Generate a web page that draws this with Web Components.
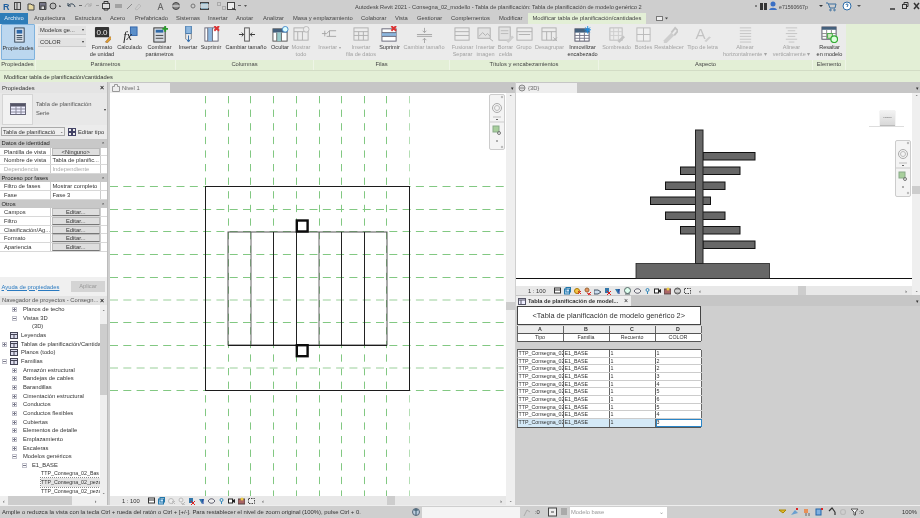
<!DOCTYPE html>
<html lang="es"><head><meta charset="utf-8"><title>Revit</title>
<style>
html,body{margin:0;padding:0;width:920px;height:518px;overflow:hidden;background:#cfcfcf}
body{font:5.8px "Liberation Sans",Arial,sans-serif;color:#333}
</style></head><body>
<rvt-app></rvt-app>
<script>
const I={
 props:'<rect x="5" y="1" width="10" height="15" fill="#dfe6ee" stroke="#345"/><rect x="7" y="3" width="6" height="4" fill="#2d68a8"/><path d="M7 9h6M7 11h6M7 13h6" stroke="#345"/>',
 unit:'<rect x="1" y="1" width="15" height="11" rx="1" fill="#333"/><text x="8.5" y="10" font-size="8.5" fill="#eee" text-anchor="middle" font-family="Liberation Sans">0.0</text><path d="M12 17l5-6 2 2-5 5z" fill="#e0a030" stroke="#853" stroke-width=".5"/>',
 fx:'<rect x="10" y="1" width="7" height="9" fill="#5b8fc9" stroke="#36a"/><text x="7" y="15" font-size="13" font-style="italic" fill="#222" text-anchor="middle" font-family="Liberation Serif">fx</text>',
 combine:'<rect x="3" y="2" width="12" height="15" fill="#d5dae0" stroke="#333"/><rect x="5" y="4" width="8" height="3" fill="#2d68a8"/><path d="M5 10h8M5 13h8" stroke="#444"/><path d="M15 0v6M12 3h6" stroke="#2a9a2a" stroke-width="2"/>',
 colins:'<rect x="6" y="0" width="6" height="8" fill="#8db7df" stroke="#47a"/><path d="M6 8v6M12 8v6" stroke="#888"/><path d="M9 10v6M7 14l2 3 2-3" stroke="#2d68a8" fill="none"/>',
 coldel:'<rect x="2" y="2" width="14" height="14" fill="#fff" stroke="#667"/><rect x="5" y="2" width="5" height="14" fill="#8db7df"/><path d="M5 2v14M10 2v14" stroke="#667"/><path d="M12 0l5 5M17 0l-5 5" stroke="#d33" stroke-width="2"/>',
 colsize:'<rect x="7" y="2" width="5" height="14" fill="#eee" stroke="#555"/><path d="M1 9h5M4 7l2 2-2 2M18 9h-5M15 7l-2 2 2 2" stroke="#333" fill="none"/>',
 colhide:'<rect x="1" y="3" width="15" height="13" fill="#fff" stroke="#555"/><rect x="1" y="3" width="15" height="4" fill="#44607c"/><rect x="5" y="7" width="5" height="9" fill="#9cc"/><path d="M5 7v9M10 7v9" stroke="#666"/><circle cx="14" cy="3.500" r="3" fill="#dff" stroke="#48c"/>',
 colshow:'<rect x="1" y="2" width="15" height="13" fill="#eee" stroke="#888"/><path d="M1 6h15M5 6v9M10 6v9" stroke="#888"/><circle cx="14" cy="3.500" r="3" fill="#eee" stroke="#999"/>',
 rowins:'<path d="M1 8h5l3-3h7M6 11h10M9 5v6" stroke="#777" fill="none"/><path d="M4 5v6" stroke="#777"/>',
 rowdata:'<rect x="1" y="2" width="15" height="13" fill="#eee" stroke="#888"/><path d="M1 6h15M1 10h15M6 6v9M11 6v9" stroke="#888"/>',
 rowdel:'<rect x="1" y="3" width="15" height="13" fill="#fff" stroke="#667"/><rect x="1" y="7" width="15" height="4" fill="#8db7df"/><path d="M1 7h15M1 11h15" stroke="#667"/><path d="M11 0l5 5M16 0l-5 5" stroke="#d33" stroke-width="2"/>',
 rowsize:'<path d="M1 9h16M1 11h16" stroke="#777"/><path d="M9 2v5M7 5l2 2 2-2M9 18v-5M7 15l2-2 2 2" stroke="#777" fill="none"/>',
 merge:'<rect x="1" y="2" width="15" height="13" fill="#eee" stroke="#888"/><path d="M1 6h15M1 10h15" stroke="#888"/>',
 img:'<rect x="1" y="2" width="13" height="11" fill="#ddd" stroke="#888"/><path d="M2 11l4-4 3 3 2-2 3 3" stroke="#888" fill="none"/><path d="M13 13l4 3" stroke="#888"/>',
 clear:'<rect x="2" y="1" width="12" height="14" fill="#ddd" stroke="#888"/><path d="M4 5h8M4 8h8" stroke="#999"/><path d="M10 16l6-6 2 2-6 6z" fill="#bbb"/>',
 group:'<rect x="1" y="2" width="16" height="13" fill="#eee" stroke="#888"/><path d="M1 6h16M3 9h12" stroke="#888"/>',
 ungroup:'<rect x="1" y="2" width="15" height="13" fill="#eee" stroke="#888"/><path d="M1 6h15M6 6v9M11 6v9" stroke="#888"/><path d="M13 12l4 4M17 12l-4 4" stroke="#888"/>',
 freeze:'<rect x="1" y="3" width="15" height="13" fill="#fff" stroke="#556"/><rect x="1" y="3" width="15" height="4" fill="#44607c"/><path d="M1 10h15M1 13h15M6 7v9M11 7v9" stroke="#778"/><path d="M14.500 0v8M11 4h7M12 1.500l5 5M17 1.500l-5 5" stroke="#1e90e8"/>',
 shade:'<rect x="2" y="2" width="13" height="13" fill="#eee" stroke="#999"/><path d="M2 6h13M2 10h13M6 2v13M11 2v13" stroke="#bbb"/><path d="M10 16l6-6 2 2-6 6z" fill="#aaa"/>',
 border:'<rect x="2" y="2" width="14" height="14" fill="#f3f3f3" stroke="#999"/><path d="M9 2v14M2 9h14" stroke="#999"/>',
 reset:'<path d="M3 15l8-8 3 3-8 8H3z" fill="#bbb"/><path d="M11 7l4-5 3 3-4 5" stroke="#aaa" stroke-width="2" fill="none"/>',
 font:'<text x="7" y="14" font-size="16" fill="#aaa" text-anchor="middle" font-family="Liberation Sans">A</text><path d="M11 16l5-5 2 1-5 5z" fill="#bbb"/>',
 alignh:'<path d="M3 2h12M3 5h12M3 8h12M3 11h12M3 14h12M3 17h12" stroke="#aaa"/>',
 alignv:'<path d="M3 2h12M5 5h8M3 8h12M5 11h8M3 14h12M6 17h6" stroke="#aaa"/>',
 hilite:'<rect x="1" y="1" width="15" height="13" fill="#fff" stroke="#556"/><rect x="1" y="1" width="15" height="3" fill="#44607c"/><path d="M1 8h15M1 11h15M6 4v10M11 4v10" stroke="#888"/><rect x="7" y="8" width="5" height="5" fill="#cfe8c0" stroke="#4a4"/><circle cx="14" cy="14" r="3.500" fill="#dfd" stroke="#3a3" stroke-width="1.300"/>'
};
const svg=(n,s=17)=>`<svg width="${s}" height="${s}" viewBox="0 0 18 18" aria-hidden="true">${I[n]||''}</svg>`;
class Base extends HTMLElement{
 constructor(){super();this.attachShadow({mode:'open'})}
 paint(css,html){this.shadowRoot.innerHTML=`<style>${css}</style>${html}`}
 a(n,d=''){const v=this.getAttribute(n);return v===null?d:v}
}
const mini=(list,gap)=>list.map(c=>`<svg width="7" height="8" viewBox="0 0 7 8" style="margin-right:${gap}px;flex:none">${c}</svg>`).join('');
const BAR=[
 '<rect x=".5" y="1" width="6" height="5" fill="#fff" stroke="#333"/><path d="M1 3h5" stroke="#333"/>',
 '<rect x=".5" y="2" width="5" height="5" fill="#cfe6fa" stroke="#27a"/><rect x="2" y=".5" width="4.500" height="4.500" fill="none" stroke="#27a"/>',
 '<circle cx="3" cy="4" r="2.500" fill="#f5c74a" stroke="#a70"/><path d="M4 4l3 3M7 4l-3 3" stroke="#d22"/>',
 '<circle cx="3" cy="3" r="2" fill="#e8935f" stroke="#963"/><path d="M3 6l4 2M7 5l-3 3" stroke="#d22"/>',
 '<path d="M0 3h4l3 2-3 2H0z" fill="#cde" stroke="#456"/>',
 '<path d="M1 1h4v5H1z" fill="#37a"/><path d="M3 4l4 4M7 4l-4 4" stroke="#d22"/>',
 '<path d="M1 2l5 0-2 5z" fill="#37a"/><path d="M5 2v5" stroke="#139"/>',
 '<circle cx="3.500" cy="3.500" r="3" fill="#dfe" stroke="#566"/><path d="M1 7h5" stroke="#566"/>',
 '<path d="M0 4c2-3 5-3 7 0-2 3-5 3-7 0z" fill="#eee" stroke="#556"/>',
 '<circle cx="3.500" cy="3" r="1.500" fill="none" stroke="#38b"/><path d="M3.500 4.500V7" stroke="#38b"/>',
 '<rect x=".5" y="2" width="4" height="4" fill="#fff" stroke="#222"/><path d="M5 3l2-1v4l-2-1z" fill="#222"/>',
 '<rect x="0" y="2" width="7" height="5" fill="#a66" stroke="#544"/><circle cx="4" cy="2" r="1.500" fill="#ec4"/>',
 '<circle cx="3.500" cy="4" r="3" fill="#aaa" stroke="#555"/><path d="M1 4h5" stroke="#fff"/>',
 '<rect x=".5" y="1.500" width="6" height="5" fill="#eee" stroke="#444" stroke-dasharray="1.500 1"/>'
];
const FADE=i=>BAR[i].replace(/stroke="#[0-9a-f]+"/g,'stroke="#bbb"').replace(/fill="#[0-9a-f]+"/g,'fill="#eee"');
class RvtTitlebar extends Base{connectedCallback(){this.paint(`
 :host{display:flex;height:13px;background:#cecece;align-items:center;position:relative;color:#444}
 .r{font:bold 9px "Liberation Sans";color:#1f5f9f;width:11px;padding-left:3px;box-sizing:border-box;flex:none}
 .q{width:344px;flex:none;display:flex}
 .t{width:300px;flex:none;white-space:nowrap;font-size:5.65px}
 .s{flex:1}
 .u{display:flex;align-items:center;width:166px;flex:none}
 .u span{font-size:5.2px}
 `,`<span class="r">R</span><div class="q"><svg width="260" height="13" viewBox="11 0 260 13" fill="none" stroke="#444">
 <rect x="14.500" y="2.500" width="6" height="7"/><path d="M17 3v6"/>
 <path d="M28 4h3l1 1h2v5h-6z" fill="#e8d9a0"/><path d="M39.500 2.500h6.500v7h-6.500z" fill="#778"/><rect x="41" y="6" width="3.500" height="3.500" fill="#ddd"/>
 <circle cx="53" cy="6" r="3" fill="#bbb"/><path d="M59 5.500l2 1-2 0" stroke="#666"/>
 <path d="M68 6c2-3 6-3 7 1M68 3v3h3" stroke="#345"/><path d="M79 5.500h3" stroke="#666"/>
 <path d="M91 6c-2-3-5-3-6 1M91 3v3h-3" stroke="#aaa"/><path d="M96 5.500h3" stroke="#999"/>
 <rect x="102.500" y="3.500" width="7" height="5" fill="#ddd"/><path d="M104 3V1.500h4V3M104 8v2h4V8" stroke="#333"/>
 <path d="M115 5h7M115 7h7" stroke="#777"/><path d="M127 9l5-5" stroke="#888"/><path d="M135 9l4-5 2 2-4 4z" stroke="#bbb"/>
 <path d="M158 10l2.500-7 2.500 7M159 7.500h3" stroke="#666"/>
 <circle cx="176" cy="6" r="3.500" fill="#888"/><path d="M172 6h8" stroke="#eee"/><circle cx="193" cy="6" r="2" stroke="#777"/>
 <rect x="200.500" y="2.500" width="8" height="7" fill="#8ab"/><path d="M200 5h9M200 7h9" stroke="#fff"/>
 <rect x="217.500" y="2.500" width="3" height="3" stroke="#aaa"/><rect x="222.500" y="6.500" width="3" height="3" stroke="#aaa"/>
 <rect x="227.500" y="2.500" width="7" height="7" fill="#eee"/><path d="M232 8l4 2" stroke="#333"/><path d="M238 5.500h3" stroke="#666"/>
 <path d="M244 5h3l-1.500 2z" fill="#555" stroke="none"/></svg></div>
 <span class="t">Autodesk Revit 2021 - Consegna_02_modello - Tabla de planificación: Tabla de planificación de modelo genérico 2</span><span class="s"></span>
 <div class="u"><svg width="14" height="13" viewBox="0 0 14 13" fill="none"><path d="M2 5l1 1-1 1-1-1z" fill="#333"/><rect x="6" y="3" width="3" height="7" fill="#333"/><rect x="10" y="3" width="3" height="7" fill="#333"/></svg>
 <svg width="10" height="13" viewBox="0 0 10 13"><circle cx="5" cy="4" r="2.500" fill="#3a6fc4"/><path d="M1 10c1-3 7-3 8 0z" fill="#3a6fc4"/></svg>
 <span style="width:38px;margin-left:1px">e71560667p</span>
 <svg width="8" height="13" viewBox="0 0 8 13"><path d="M2 5h4L4 7z" fill="#333"/></svg>
 <svg width="12" height="13" viewBox="0 0 12 13" fill="none" stroke="#3a6f9f"><path d="M1 3h2l2 5h5l1-4H4"/><circle cx="5.500" cy="10" r=".8"/><circle cx="9.500" cy="10" r=".8"/></svg>
 <svg width="16" height="13" viewBox="0 0 16 13" style="margin-left:3px"><circle cx="7" cy="6" r="4" fill="#fff" stroke="#2d6ca8"/><path d="M6 5c0-1.500 2-1.500 2 0 0 1-1 1-1 2" stroke="#2d6ca8" fill="none"/></svg>
 <svg width="6" height="13" viewBox="0 0 6 13"><path d="M1 5h4L3 7z" fill="#555"/></svg>
 <svg width="32" height="13" viewBox="0 0 32 13" style="margin-left:26px;flex:none" fill="none" stroke="#333"><path d="M2 9h5" stroke-width="1.500"/><rect x="14.500" y="4.500" width="4" height="4"/><path d="M16 4V2.500h4v4h-1.500"/><path d="M26 3l5 6M31 3l-5 6" stroke-width="1.500"/></svg></div>`)}}
class RvtTabs extends Base{connectedCallback(){
 const t=['Arquitectura','Estructura','Acero','Prefabricado','Sistemas','Insertar','Anotar','Analizar','Masa y emplazamiento','Colaborar','Vista','Gestionar','Complementos','Modificar'];
 let html='<span class="f">Archivo</span>';
 const w=[41,35,25,41,32,28,27,30,68,34,22,34,48,30];
 html+=t.map((x,i)=>`<span class="t" style="width:${w[i]}px">${x}</span>`).join('');
 html+='<span class="c">Modificar tabla de planificación/cantidades</span><svg width="14" height="10" viewBox="0 0 14 10" style="margin-left:10px"><rect x=".5" y="2.500" width="6" height="4" fill="#eee" stroke="#777"/><path d="M9 3.500h3l-1.500 2z" fill="#444"/></svg>';
 this.paint(`:host{display:flex;height:11px;background:#cecece;align-items:stretch;white-space:nowrap;color:#444}
 .f{width:28px;background:#2e7cb8;color:#e8f0f8;text-align:center;line-height:10px;margin-right:6px}
 .t{line-height:11px;flex:none}
 .c{width:118px;text-align:center;background:#e3efd6;line-height:11px;margin-left:-1px}svg{align-self:center}`,html)}}
class RvtBtn extends Base{connectedCallback(){
 const d=this.hasAttribute('off'),dd=this.hasAttribute('drop');
 const l=this.a('label').split('|').join('<br>');
 this.paint(`:host{display:flex;flex-direction:column;align-items:center;width:${this.a('w')}px;flex:none;box-sizing:border-box;height:36px;text-align:center;line-height:7px;white-space:nowrap;color:${d?'#a2a2a2':'#333'};font-size:5.55px}
 .i{height:17px;margin-top:2px;display:flex;align-items:center;${d?'opacity:.6':''}}
 .l{margin-top:.5px}
 :host([on]){background:#bcd7ef;border:1px solid #7fb2dd;border-radius:1px}
 `,`<div class="i">${svg(this.a('icon'))}</div><div class="l">${l}${dd?' <small style="font-size:4px">▾</small>':''}</div>`)}}
class RvtPanel extends Base{connectedCallback(){this.paint(`:host{display:flex;flex-direction:column;width:${this.a('w')}px;flex:none}
 .b{height:36px;background:#ebebeb;display:flex}
 .t{height:10px;line-height:9px;text-align:center;background:#e3efd6;color:#444;border-right:1px solid #eef5e6;box-sizing:border-box}`,
 `<div class="b"><slot></slot></div><div class="t">${this.a('title')}</div>`)}}
class RvtCombos extends Base{connectedCallback(){this.paint(`:host{display:flex;flex-direction:column;gap:3px;width:52px;flex:none;padding:2px 2px 0;box-sizing:border-box}
 div{height:9px;background:#e2e2e2;border-bottom:1px solid #ccc;line-height:8px;padding:0 2px;display:flex;justify-content:space-between;width:48px;box-sizing:border-box}
 i{font-style:normal;font-size:4px}`,`<div>Modelos ge... <i>▾</i></div><div>COLOR <i>▾</i></div>`)}}
class RvtRibbon extends Base{connectedCallback(){this.paint(`:host{display:flex;height:46px;background:#e3efd6;color:#333}`,`<slot></slot>`)}}
class RvtContext extends Base{connectedCallback(){this.paint(`:host{display:block;height:12px;line-height:12px;background:#e3efd6;padding-left:4px;border-top:1px solid #d2dcc5;box-sizing:border-box;color:#333}`,`Modificar tabla de planificación/cantidades`)}}
class RvtProps extends Base{connectedCallback(){
 const sec=t=>`<div class="sec">${t}<i>⌃</i></div>`;
 const row=(a,b,k='')=>`<div class="row"><span class="n ${k}">${a}</span><span class="v ${k}">${b}</span></div>`;
 const btn=(a)=>`<div class="row"><span class="n">${a}</span><span class="v"><b>Editar...</b></span></div>`;
 this.paint(`:host{display:flex;flex-direction:column;height:214px;flex:none;background:#f0f0f0;white-space:nowrap;overflow:hidden;border-right:1px solid #bbb;box-sizing:border-box}
 .h{height:11px;line-height:12px;padding:0 2px;display:flex;justify-content:space-between;background:#e4e4e4;flex:none}
 .h b{font-size:7px;line-height:11px;padding-right:1px;color:#222}
 .ty{height:32px;display:flex;background:#e8e8e8;align-items:center;flex:none}
 .ib{width:31px;height:31px;margin-left:2px;background:#f2f2f2;border:1px solid #d5d5d5;box-sizing:border-box;display:flex;align-items:center;justify-content:center}
 .tn{line-height:9px;margin-left:3px;flex:1;color:#555}
 .ar{font-size:4px;margin-right:1px}
 .sel{height:14px;display:flex;align-items:center;background:#ececec;flex:none;padding-bottom:1px;box-sizing:border-box}
 .cb{width:64px;height:9px;border:1px solid #aaa;background:#eee;margin-left:1px;line-height:8px;padding-left:1px;box-sizing:border-box;overflow:hidden;position:relative;flex:none}
 .cb i{position:absolute;right:0;top:0;background:#eee;padding:0 1px;font:4px/8px "Liberation Sans"}
 .ed{margin-left:3px;display:flex;align-items:center;gap:2px}
 .g{flex:1;background:#fff;overflow:hidden}
 .sec{height:8.67px;line-height:8.67px;background:#c8c8c8;padding-left:1.500px;position:relative;color:#222}
 .sec i{position:absolute;right:2px;top:1px;font-style:normal;font-size:5px}
 .row{height:8.67px;line-height:8px;display:flex;box-sizing:border-box;border-bottom:.67px solid #d8d8d8}
 .n{width:51px;padding-left:4px;box-sizing:border-box;overflow:hidden;flex:none;border-right:.67px solid #ccc}
 .v{width:50px;padding-left:1.500px;box-sizing:border-box;flex:none;border-right:.67px solid #ccc;text-align:left}
 .dim{color:#a8a8a8}
 .v b{display:block;font-weight:normal;background:#dedede;border:.5px solid #bbb;border-bottom:1px solid #777;text-align:center;margin-left:-1px;height:8px;line-height:7.500px;box-sizing:border-box}
 .foot{height:19px;display:flex;align-items:center;justify-content:space-between;flex:none;background:#f0f0f0;padding:0 2px 0 1.500px}
 a{color:#2a7ac0;text-decoration:underline}
 .ap{width:34px;height:11px;background:#d4d4d4;color:#999;text-align:center;line-height:11px}
 `,`<div class="h"><span>Propiedades</span><b>×</b></div>
 <div class="ty"><div class="ib"><svg width="16" height="12" viewBox="0 0 16 12"><rect x=".5" y=".5" width="15" height="11" fill="#eef" stroke="#667"/><rect x="1" y="1" width="14" height="2.500" fill="#556"/><path d="M1 6h14M1 9h14M6 3v8M11 3v8" stroke="#889"/></svg></div><div class="tn">Tabla de planificación<br>Serie</div><span class="ar">▾</span></div>
 <div class="sel"><div class="cb">Tabla de planificació<i>⌄</i></div><div class="ed"><svg width="8" height="8" viewBox="0 0 8 8" fill="none" stroke="#446"><rect x=".5" y=".5" width="3" height="3"/><rect x="4.500" y=".5" width="3" height="3"/><rect x=".5" y="4.500" width="3" height="3"/><rect x="4.500" y="4.500" width="3" height="3"/></svg>Editar tipo</div></div>
 <div class="g">${sec('Datos de identidad')}${row('Plantilla de vista','<b>&lt;Ninguno&gt;</b>')}${row('Nombre de vista','Tabla de planific...')}${row('Dependencia','Independiente','dim')}${sec('Proceso por fases')}${row('Filtro de fases','Mostrar completo')}${row('Fase','Fase 3')}${sec('Otros')}${btn('Campos')}${btn('Filtro')}${btn('Clasificación/Ag...')}${btn('Formato')}${btn('Apariencia')}</div>
 <div class="foot"><a>Ayuda de propiedades</a><span class="ap">Aplicar</span></div>`)}}
class RvtBrowser extends Base{connectedCallback(){
 const D=[[12,1,0,23,'Planos de techo'],[12,2,0,23,'Vistas 3D'],[0,0,0,32,'(3D)'],[0,0,1,21,'Leyendas'],[2,1,1,21,'Tablas de planificación/Cantida'],[0,0,2,21,'Planos (todo)'],[2,2,2,21,'Familias'],
 ...['Armazón estructural','Bandejas de cables','Barandillas','Cimentación estructural','Conductos','Conductos flexibles','Cubiertas','Elementos de detalle','Emplazamiento','Escaleras'].map(t=>[12,1,0,23,t]),
 [12,2,0,23,'Modelos genéricos'],[22,2,0,32,'E1_BASE'],[0,0,0,41,'TTP_Consegna_02_Bas','t'],[0,0,0,41,'TTP_Consegna_02_peza','t sel'],[0,0,0,41,'TTP_Consegna_02_peza','t']];
 const rows=D.map(([x,e,ic,tx,t,c])=>{
  const ex=e?`<svg class="abs" style="left:${x}px" width="5" height="5" viewBox="0 0 5 5"><rect x=".5" y=".5" width="4" height="4" fill="#fff" stroke="#c2c2cc"/><path d="M1 2.500h3${e==1?'M2.500 1v3':''}" stroke="#778"/></svg>`:'';
  const ik=ic?`<svg class="abs" style="left:10px;top:1px" width="8" height="7" viewBox="0 0 8 7"><rect x=".5" y=".5" width="7" height="6" fill="#dde" stroke="#445"/><path d="M.5 2.500h7M4 2.500v4" stroke="#445"/></svg>`:'';
  return `<div class="r ${c||''}"><span class="x" style="margin-left:${tx}px">${t}</span>${ex}${ik}</div>`}).join('');
 this.paint(`:host{display:flex;flex-direction:column;flex:1;background:#fff;overflow:hidden;white-space:nowrap;border-right:1px solid #bbb;box-sizing:border-box}
 .h{height:9px;line-height:9px;background:#e4e4e4;padding:0 2px;display:flex;justify-content:space-between;flex:none;color:#555}
 .h b{font-size:7px;padding-right:1px;color:#222}
 .m{flex:1;display:flex;min-height:0}
 .tree{width:100px;overflow:hidden;flex:none}
 .r{height:8.67px;line-height:8.67px;position:relative}
 .t{font-size:5.3px}
 .sel .x{display:block;background:#e4e4e4;outline:.5px dotted #888;outline-offset:-.5px}
 .abs{position:absolute;top:2px}
 .vs{width:7px;background:#efefef;display:flex;flex-direction:column;align-items:center;flex:none}
 .vs u{display:block;width:7px;height:71px;margin-top:9px;background:#cdcdcd}
 .ar{font-size:4px;line-height:6px;text-decoration:none}
 .vs .sp{flex:1}
 .bs{height:9px;background:#efefef;flex:none;display:flex;align-items:center;font-size:5px;color:#333}
 .bs u{display:block;width:64px;height:9px;background:#cdcdcd;margin:0 23px 0 3px}
 `,`<div class="h"><span>Navegador de proyectos - Consegn...</span><b>×</b></div>
 <div class="m"><div class="tree">${rows}</div><div class="vs"><span class="ar" style="margin-top:4px">⌃</span><u></u><span class="sp"></span><span class="ar">⌄</span></div></div>
 <div class="bs"><span style="margin-left:3px">‹</span><u></u><span>›</span></div>`)}}
class RvtView extends Base{connectedCallback(){
 const w=this.a('tabw'),st=this.hasAttribute('sched');
 this.paint(`:host{display:flex;flex-direction:column;flex:${this.a('flex','1')};min-height:0;height:${this.a('h','auto')}}
 .s{height:11px;background:#c6c6c6;display:flex;flex:none;align-items:flex-end;justify-content:space-between}
 .tab{width:${w}px;height:10px;background:#eeeeee;display:flex;align-items:center;gap:2px;padding-left:2px;box-sizing:border-box;position:relative;white-space:nowrap;color:#666;${st?'color:#333;font-weight:bold;font-size:5.7px':''}}
 .x{position:absolute;right:3px;top:0;font:7px/10px "Liberation Sans";color:#222}
 .dd{font-size:5px;line-height:10px;padding-right:1px}
 `,`<div class="s"><div class="tab"><slot name="icon"></slot><span>${this.a('tab')}</span>${st?'<span class="x">×</span>':''}</div><span class="dd">▾</span></div><slot></slot>`)}}
class RvtBars extends Base{connectedCallback(){
 const set=this.a('plan')?[BAR[0],BAR[1],FADE(2),FADE(3),BAR[5],BAR[6],BAR[8],BAR[9],BAR[10],BAR[11],BAR[13]]:BAR;
 this.paint(`:host{display:flex;height:9px;background:#e8e8e8;align-items:center;flex:none;white-space:nowrap;position:relative}
 .sc{margin-left:${this.a('sx')}px;width:${this.a('sw')}px;flex:none}
 .ic{display:flex;flex:none;width:${this.a('iw')}px}
 .th{background:#cdcdcd;height:9px;width:8px;margin-left:${this.a('tx')}px;flex:none}
 .g{font-size:6px;margin-left:1px;color:#333;flex:none}`,
 `<span class="sc">1 : 100</span><div class="ic">${mini(set,3)}</div><span class="g">‹</span><span class="th"></span><span class="g" style="margin-left:${this.a('gx')}px">›</span>`)}}
class RvtVscroll extends Base{connectedCallback(){this.paint(`:host{display:flex;flex-direction:column;width:${this.a('w','9')}px;background:#efefef;align-items:center;flex:none;font-size:4px;line-height:8px}
 u{display:block;width:100%;height:8px;background:#cdcdcd;margin-top:${this.a('t')}px;text-decoration:none} .f{flex:1}`,`<span>⌃</span><u></u><span class="f"></span><span>⌄</span>`)}}
class RvtNav extends Base{connectedCallback(){const h=this.a('h');this.paint(`:host{position:absolute;display:block;right:${this.a('r')}px;top:${this.a('t')}px;width:16px;height:${h}px;box-sizing:border-box;background:#f4f4f4;border:1px solid #ccc;border-radius:2px}`,
 `<svg width="14" height="${h-2}" viewBox="0 0 14 54" preserveAspectRatio="xMidYMin" fill="none"><circle cx="12" cy="2" r="1.200" fill="#bbb"/><circle cx="7" cy="13" r="4.500" stroke="#aaa"/><circle cx="7" cy="13" r="2.500" stroke="#bbb"/><path d="M3 22h8" stroke="#999" stroke-width=".6" /><path d="M6 24.500h2" stroke="#666"/><path d="M0 27h14" stroke="#ccc"/><rect x="3" y="31" width="6" height="6" fill="#a8cf9c" stroke="#8a8"/><circle cx="9" cy="38" r="1.500" stroke="#777"/><path d="M6 46h2" stroke="#666"/><circle cx="12" cy="52" r="1.200" fill="#bbb"/></svg>`)}}
class RvtPlan extends Base{connectedCallback(){
 const vx=[205.5,228.5,250.5,273.5,296.5,319.5,341.5,364.5,386.5,409.5];
 const hy=[186.5,209.5,231.5,254.5,277.5,300,322.5,345.5,368,390.5];
 let g='';
 vx.forEach((x,i)=>g+=`<line x1="${x}" y1="96" x2="${x}" y2="497" stroke="${i==9?'#b4deb4':'#82c882'}" stroke-dasharray="7.300 6.300"/>`);
 hy.forEach((y,i)=>{const lt=i==5||i==8;g+=`<line x1="110" y1="${y}" x2="506" y2="${y}" stroke="${lt?'#bce0bc':'#82c882'}" stroke-width="${lt?1.400:1}" stroke-dasharray="8 5.300"/>`});
 const il=[[251,'#666'],[273.5,'#222'],[296.5,'#222'],[319,'#666'],[341.5,'#222'],[364.5,'#222']];
 this.paint(`:host{display:block;flex:1;position:relative;background:#fff;overflow:hidden;min-width:0}svg.p{display:block}`,
 `<svg class="p" width="396" height="404" viewBox="110 93 396 404">${g}
 <rect x="205.500" y="186.500" width="204" height="204" fill="none" stroke="#1c1c1c"/>
 <rect x="228" y="232" width="159" height="113" fill="none" stroke="#555"/>
 ${il.map(([x,c])=>`<line x1="${x}" y1="232" x2="${x}" y2="345" stroke="${c}"/>`).join('')}
 <line x1="228" y1="345.500" x2="387" y2="345.500" stroke="#1c1c1c"/>
 <rect x="296.800" y="220.500" width="10.800" height="11" fill="#fff" stroke="#0c0c0c" stroke-width="2.400"/>
 <rect x="296.800" y="345.200" width="10.800" height="11" fill="#fff" stroke="#0c0c0c" stroke-width="2.400"/></svg>
 <rvt-nav r="1" t="1" h="56"></rvt-nav>`)}}
class RvtElev extends Base{connectedCallback(){
 const bars=[[703,152.5,52],[680.5,167,59.5],[665.5,182,59.5],[650.5,197,60],[665.5,212,59.5],[680.5,226.5,59.5],[703,241,52]];
 this.paint(`:host{display:block;flex:1;position:relative;background:#fff;overflow:hidden;min-width:0}svg.p{display:block}
 .cube{position:absolute;right:17px;top:17px;width:15px;height:15px;background:linear-gradient(#f4f4f4,#d8d8d8);box-shadow:0 1px 1px #bbb;font:2.500px/15px "Liberation Sans";text-align:center;color:#666}
 .sh{position:absolute;right:8px;top:33px;width:35px;height:1px;background:#ddd}`,
 `<svg class="p" width="396" height="192" viewBox="516 93 396 192">
 <line x1="516" y1="278.500" x2="912" y2="278.500" stroke="#111"/>
 <rect x="636" y="263.500" width="133.500" height="15" fill="#676767" stroke="#222" stroke-width=".8"/>
 ${bars.map(([x,y,w])=>`<rect x="${x}" y="${y}" width="${w}" height="7.500" fill="#676767" stroke="#111" stroke-width="1"/>`).join('')}
 <rect x="695.500" y="130" width="7.500" height="133.500" fill="#676767" stroke="#222" stroke-width="1"/></svg>
 <div class="cube">FRONT</div><div class="sh"></div>
 <rvt-nav r="1" t="47" h="57"></rvt-nav>`)}}
class RvtSchedule extends Base{connectedCallback(){
 const vals=[1,2,2,3,4,5,6,5,4,3];
 const cells=vals.map((v,i)=>{const l=i==9;return `<div class="tr ${l?'last':''}"><span>TTP_Consegna_02</span><span>E1_BASE</span><span>1</span><span class="${l?'ed':''}">${v}</span></div>`}).join('');
 this.paint(`:host{display:block;flex:1;background:#cfcfcf;overflow:hidden;min-height:0;color:#333}
 .w{width:184.500px;margin-left:.5px}
 .ti{height:19px;background:#fff;border:1px solid #444;box-sizing:border-box;text-align:center;font-size:7.400px;line-height:18px;white-space:nowrap;color:#333}
 .tr{display:grid;grid-template-columns:46px 46px 46px 46px;height:7.670px;line-height:7.500px;background:#fff;border-bottom:.67px solid #ccc;box-sizing:border-box;font-size:5.300px;border-left:1px solid #666}
 .tr span{border-right:1px solid #666;padding-left:1px;overflow:hidden;white-space:nowrap;box-sizing:border-box}
 .hd span{text-align:center;padding:0}
 .a{background:#ececec;font-weight:bold;height:8px;margin-top:1px;border-bottom:1px solid #555}
 .b{height:8px;border-bottom:1px solid #555}
 .gap{height:7px}
 .body{border-top:1px solid #555;border-bottom:1px solid #555}
 .last{background:#d4e9f7;border-bottom:0}
 .tr .ed{background:#fff;outline:1px solid #2a86c8;outline-offset:-1px}
 `,`<div class="w"><div class="ti">&lt;Tabla de planificación de modelo genérico 2&gt;</div>
 <div class="tr hd a"><span>A</span><span>B</span><span>C</span><span>D</span></div>
 <div class="tr hd b"><span>Tipo</span><span>Familia</span><span>Recuento</span><span>COLOR</span></div>
 <div class="gap"></div><div class="body">${cells}</div></div>`)}}
class RvtStatus extends Base{connectedCallback(){
 this.paint(`:host{display:flex;height:13px;background:#cfcfcf;border-top:1px solid #eee;box-sizing:border-box;align-items:center;white-space:nowrap;color:#333;flex:none}
 .m{width:411px;padding-left:2px;box-sizing:border-box;flex:none;font-size:5.900px}
 .bx{background:#f4f4f4;height:11px;flex:none}
 .cm{width:97px;background:#fff;height:11px;flex:none;color:#999;line-height:11px;padding-left:1px;box-sizing:border-box;display:flex;justify-content:space-between;padding-right:3px}
 .i{flex:none;display:flex;align-items:center}`,
 `<span class="m">Amplíe o reduzca la vista con la tecla Ctrl + rueda del ratón o Ctrl + [+/-]. Para restablecer el nivel de zoom original (100%), pulse Ctrl + 0.</span>
 <svg width="11" height="10" viewBox="0 0 11 10" class="i"><circle cx="5" cy="5" r="3.500" fill="#bcd" stroke="#567"/><path d="M3 3h4M5 2v6" stroke="#356"/></svg>
 <div class="bx" style="width:98px"></div>
 <svg class="i" width="13" height="10" viewBox="0 0 13 10" style="margin-left:2px"><path d="M2 9l3-6 3 2" stroke="#aaa" fill="none"/></svg><span style="width:8px">:0</span>
 <svg class="i" width="10" height="10" viewBox="0 0 10 10" style="margin-left:5px"><rect x=".5" y="1" width="8" height="8" fill="#eee" stroke="#444"/><path d="M3 5h3" stroke="#444"/></svg>
 <svg class="i" width="10" height="10" viewBox="0 0 10 10" style="margin-left:2px"><rect x="1" y="1" width="6" height="7" fill="#aaa"/></svg>
 <div class="cm">Modelo base<span>⌄</span></div>
 <svg class="i" width="75" height="10" viewBox="0 0 75 10" style="margin-left:112px" fill="none"><path d="M0 3h7L4 6z" fill="#e2b92f" stroke="#a80"/><path d="M12 8l4-5 3 3z" fill="#6a9fd0"/><path d="M17 1l2 2M19 1l-2 2" stroke="#d22"/><rect x="25" y="2" width="4" height="4" fill="#e89058"/><path d="M27 6v3M30 6v3" stroke="#666"/><rect x="37" y="2" width="5" height="6" fill="#7fb0e0" stroke="#26a"/><path d="M42 1l2 2M44 1l-2 2" stroke="#d22"/><path d="M50 4l3-3 3 4M56 5v3" stroke="#333" stroke-width="1.200"/><circle cx="64" cy="5" r="2.500" stroke="#bbb" stroke-width="1.200"/></svg>
 <svg class="i" width="8" height="10" viewBox="0 0 8 10" style="margin-left:-3px" fill="none"><path d="M0 2h7L4.500 5v3H3V5z" fill="#fff" stroke="#555"/></svg><span style="width:43px">:0</span><span>100%</span>`)}}
class RvtApp extends Base{connectedCallback(){
 this.paint(`:host{display:flex;flex-direction:column;width:920px;height:518px;overflow:hidden;background:#cfcfcf;filter:blur(.33px)}
 .main{display:flex;height:423px;flex:none}
 .left{width:108px;display:flex;flex-direction:column;flex:none}
 .v1{width:405px;margin-left:2px;display:flex;flex:none}
 .v2{width:404px;margin-left:1px;display:flex;flex-direction:column;flex:none}
 .vb{flex:1;display:flex;min-height:0}
 .col{flex:1;display:flex;flex-direction:column;min-width:0}
 `,`<rvt-titlebar></rvt-titlebar><rvt-tabs></rvt-tabs>
 <rvt-ribbon>
  <rvt-panel w="36" title="Propiedades"><rvt-btn w="34" on icon="props" label="Propiedades" style="margin-left:1px"></rvt-btn></rvt-panel>
  <rvt-panel w="140" title="Parámetros"><rvt-combos></rvt-combos><rvt-btn w="28" icon="unit" label="Formato|de unidad"></rvt-btn><rvt-btn w="27" icon="fx" label="Calculado"></rvt-btn><rvt-btn w="33" icon="combine" label="Combinar|parámetros"></rvt-btn></rvt-panel>
  <rvt-panel w="138" title="Columnas"><rvt-btn w="24" icon="colins" label="Insertar"></rvt-btn><rvt-btn w="22" icon="coldel" label="Suprimir"></rvt-btn><rvt-btn w="48" icon="colsize" label="Cambiar tamaño"></rvt-btn><rvt-btn w="20" icon="colhide" label="Ocultar"></rvt-btn><rvt-btn w="22" off icon="colshow" label="Mostrar|todo"></rvt-btn></rvt-panel>
  <rvt-panel w="136" title="Filas"><rvt-btn w="31" off drop icon="rowins" label="Insertar"></rvt-btn><rvt-btn w="32" off icon="rowdata" label="Insertar|fila de datos"></rvt-btn><rvt-btn w="25" icon="rowdel" label="Suprimir"></rvt-btn><rvt-btn w="44" off icon="rowsize" label="Cambiar tamaño"></rvt-btn></rvt-panel>
  <rvt-panel w="149" title="Títulos y encabezamientos"><rvt-btn w="25" off icon="merge" label="Fusionar|Separar"></rvt-btn><rvt-btn w="21" off icon="img" label="Insertar|imagen"></rvt-btn><rvt-btn w="19" off icon="clear" label="Borrar|celda"></rvt-btn><rvt-btn w="18" off icon="group" label="Grupo"></rvt-btn><rvt-btn w="33" off icon="ungroup" label="Desagrupar"></rvt-btn><rvt-btn w="33" icon="freeze" label="Inmovilizar|encabezado"></rvt-btn></rvt-panel>
  <rvt-panel w="214" title="Aspecto"><rvt-btn w="35" off icon="shade" label="Sombreado"></rvt-btn><rvt-btn w="19" off icon="border" label="Bordes"></rvt-btn><rvt-btn w="32" off icon="reset" label="Restablecer"></rvt-btn><rvt-btn w="35" off icon="font" label="Tipo de letra"></rvt-btn><rvt-btn w="50" off icon="alignh" label="Alinear|horizontalmente ▾"></rvt-btn><rvt-btn w="43" off icon="alignv" label="Alinear|verticalmente ▾"></rvt-btn></rvt-panel>
  <rvt-panel w="33" title="Elemento"><rvt-btn w="33" icon="hilite" label="Resaltar|en modelo"></rvt-btn></rvt-panel>
 </rvt-ribbon>
 <rvt-context></rvt-context>
 <div class="main">
  <div class="left"><rvt-props></rvt-props><rvt-browser></rvt-browser></div>
  <div class="v1"><rvt-view tab="Nivel 1" tabw="60" style="width:405px">
    <svg slot="icon" width="8" height="8" viewBox="0 0 8 8" fill="none" stroke="#999"><path d="M.5 2.500h2v-2h3v2h2v5h-7z"/></svg>
    <div class="vb"><div class="col"><rvt-plan></rvt-plan><rvt-bars plan="1" sx="12" sw="26" iw="113" tx="123" gx="105"></rvt-bars></div><rvt-vscroll t="201"></rvt-vscroll></div>
  </rvt-view></div>
  <div class="v2">
   <rvt-view tab="{3D}" tabw="61" h="213px" flex="none">
    <svg slot="icon" width="8" height="8" viewBox="0 0 8 8" fill="none" stroke="#888"><circle cx="4" cy="4" r="3" fill="#ddd"/><path d="M1 4h6"/></svg>
    <div class="vb"><div class="col"><rvt-elev></rvt-elev><rvt-bars sx="12" sw="26" iw="144" tx="97" gx="99"></rvt-bars></div><rvt-vscroll w="8" t="85"></rvt-vscroll></div>
   </rvt-view>
   <rvt-view tab="Tabla de planificación de model..." tabw="115" sched>
    <svg slot="icon" width="8" height="7" viewBox="0 0 8 7"><rect x=".5" y=".5" width="7" height="6" fill="#eef" stroke="#556"/><path d="M.5 2h7M3 2v5" stroke="#556"/></svg>
    <rvt-schedule></rvt-schedule>
   </rvt-view>
  </div>
 </div>
 <rvt-status></rvt-status>`)}}
const reg={'rvt-titlebar':RvtTitlebar,'rvt-tabs':RvtTabs,'rvt-btn':RvtBtn,'rvt-panel':RvtPanel,'rvt-combos':RvtCombos,'rvt-ribbon':RvtRibbon,'rvt-context':RvtContext,'rvt-props':RvtProps,'rvt-browser':RvtBrowser,'rvt-view':RvtView,'rvt-bars':RvtBars,'rvt-vscroll':RvtVscroll,'rvt-nav':RvtNav,'rvt-plan':RvtPlan,'rvt-elev':RvtElev,'rvt-schedule':RvtSchedule,'rvt-status':RvtStatus,'rvt-app':RvtApp};
for(const k in reg)customElements.define(k,reg[k]);
</script></body></html>
